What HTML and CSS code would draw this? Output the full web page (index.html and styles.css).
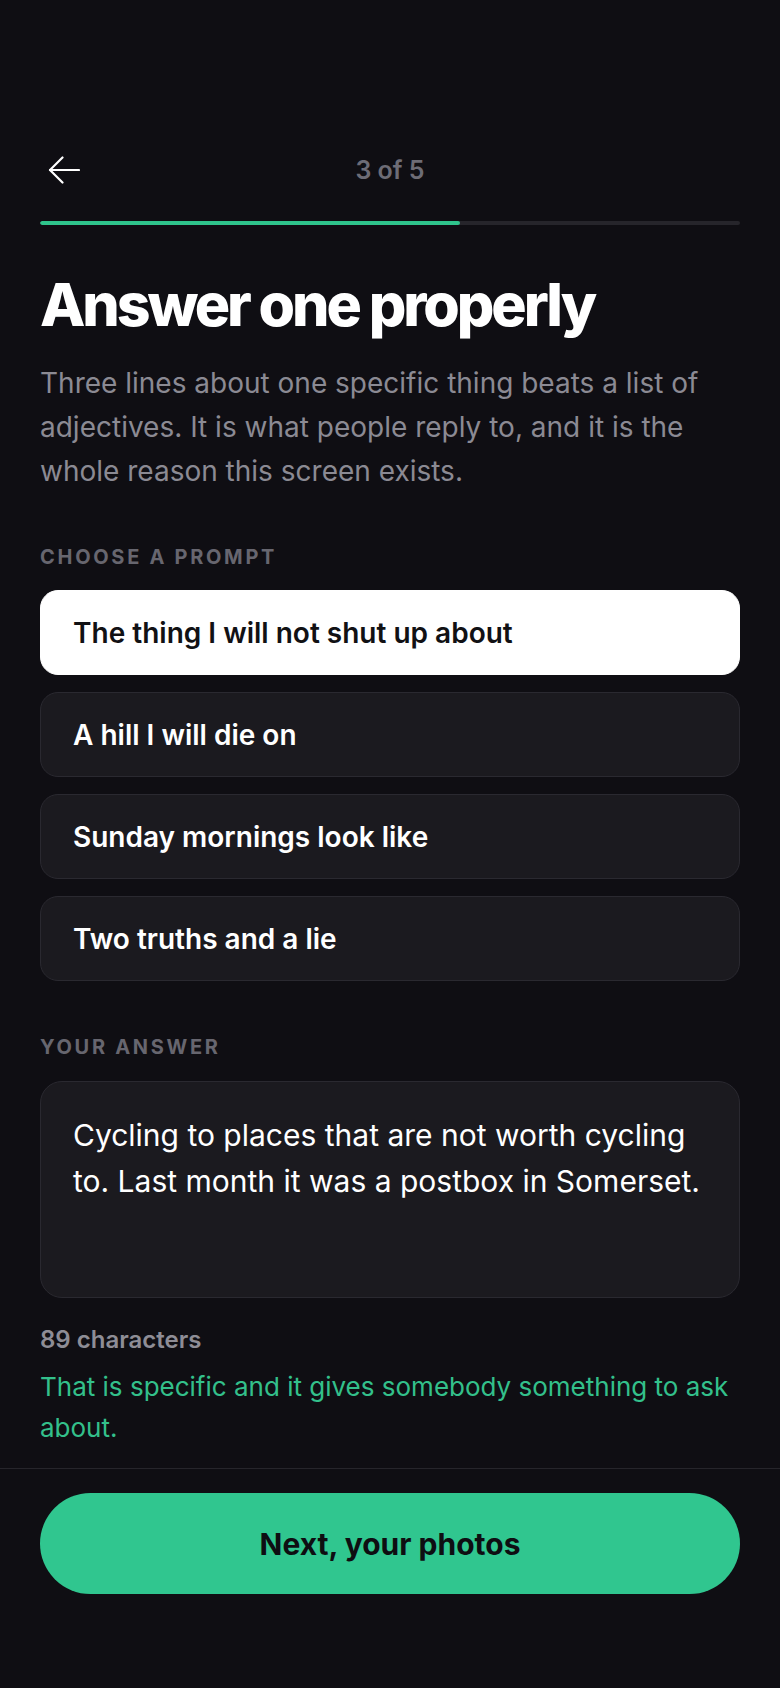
FILE: index.html
```html
<!DOCTYPE html>
<html lang="en">
<head>
<meta charset="utf-8">
<title>Answer one properly</title>
<link rel="stylesheet" href="styles.css">
</head>
<body>
<div class="screen">
  <main class="content">
    <header class="topbar">
      <button class="back" aria-label="Back">
        <svg width="32" height="28" viewBox="0 0 32 28" fill="none" stroke="#ffffff" stroke-width="2.2" stroke-linecap="round" stroke-linejoin="round">
          <path d="M31 14H2"/>
          <path d="M14.5 1.5L2 14L14.5 26.5"/>
        </svg>
      </button>
      <div class="step">3 of 5</div>
      <div class="spacer"></div>
    </header>
    <div class="progress"><div class="progress-fill" style="width:60%"></div></div>

    <h1 class="title">Answer one properly</h1>
    <p class="lead">Three lines about one specific thing beats a list of adjectives. It is what people reply to, and it is the whole reason this screen exists.</p>

    <div class="label label-prompt">Choose a prompt</div>
    <div class="prompts">
      <div class="prompt selected">The thing I will not shut up about</div>
      <div class="prompt">A hill I will die on</div>
      <div class="prompt">Sunday mornings look like</div>
      <div class="prompt">Two truths and a lie</div>
    </div>

    <div class="label label-answer">Your answer</div>
    <div class="answer">Cycling to places that are not worth cycling to. Last month it was a postbox in Somerset.</div>
    <div class="count">89 characters</div>
    <p class="feedback">That is specific and it gives somebody something to ask about.</p>
  </main>
  <footer class="footer">
    <button class="next">Next, your photos</button>
  </footer>
</div>
</body>
</html>
```

FILE: styles.css
```css
* { box-sizing: border-box; }
html, body { margin: 0; padding: 0; }
body {
  background: #0f0e13;
  color: #ffffff;
  font-family: Inter, "Noto Sans", sans-serif;
}
.screen {
  min-height: 100vh;
  display: flex;
  flex-direction: column;
}
.content {
  flex: 1;
  padding: 146px 40px 0;
}
.topbar {
  display: grid;
  grid-template-columns: 48px 1fr 48px;
  align-items: center;
  height: 48px;
}
.back {
  width: 48px;
  height: 48px;
  padding: 0 0 0 8px;
  border: 0;
  background: transparent;
  display: flex;
  align-items: center;
  justify-content: flex-start;
}
.step {
  text-align: center;
  font-size: 25px;
  font-weight: 600;
  color: #6d6c76;
}
.progress {
  margin-top: 27px;
  height: 4px;
  border-radius: 2px;
  background: #26252b;
  overflow: hidden;
}
.progress-fill {
  height: 100%;
  background: #2fc48c;
  border-radius: 2px;
}
.title {
  margin: 47px 0 0;
  font-size: 59px;
  line-height: 66px;
  font-weight: 800;
  letter-spacing: -0.052em;
}
.lead {
  margin: 23px 0 0;
  font-size: 28px;
  line-height: 44px;
  color: #8b8a93;
}
.label {
  font-size: 20px;
  line-height: 24px;
  font-weight: 700;
  letter-spacing: 0.135em;
  text-transform: uppercase;
  color: #67666f;
}
.label-prompt { margin-top: 52px; }
.label-answer { margin-top: 54px; }
.prompts {
  margin-top: 21px;
  display: flex;
  flex-direction: column;
  gap: 17px;
}
.prompt {
  height: 85px;
  display: flex;
  align-items: center;
  padding: 0 32px;
  border-radius: 18px;
  border: 1px solid #2a2930;
  background: #1b1a1f;
  font-size: 28px;
  font-weight: 600;
  color: #ffffff;
}
.prompt.selected {
  background: #ffffff;
  border-color: #ffffff;
  color: #111114;
}
.answer {
  margin-top: 22px;
  height: 217px;
  padding: 30px 32px;
  border-radius: 22px;
  border: 1px solid #2a2930;
  background: #1b1a1f;
  font-size: 30px;
  line-height: 46px;
  color: #ffffff;
}
.count {
  margin-top: 28px;
  font-size: 24px;
  line-height: 28px;
  font-weight: 600;
  color: #8e8d96;
}
.feedback {
  margin: 12px 0 0;
  font-size: 26px;
  line-height: 41px;
  color: #33c08b;
}
.footer {
  border-top: 1px solid #26252b;
  padding: 24px 40px 94px;
}
.next {
  display: block;
  width: 100%;
  height: 101px;
  border: 0;
  border-radius: 51px;
  background: #30c68f;
  color: #0e0e12;
  font-family: Inter, "Noto Sans", sans-serif;
  font-size: 30px;
  font-weight: 700;
}
```
